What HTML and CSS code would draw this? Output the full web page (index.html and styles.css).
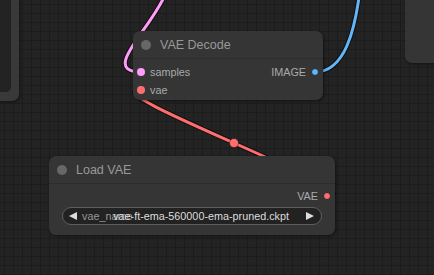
FILE: index.html
```html
<!DOCTYPE html>
<html lang="en">
<head>
    <meta charset="UTF-8">
    <title>VAE Decode</title>
    <link rel="stylesheet" href="styles.css">
</head>
<body>

    <div id="canvas">
        <svg class="links" width="434" height="275" viewBox="0 0 434 275">
            <path class="edge" d="M165,-5 C150,30 100,72 141,72"/>
            <path class="wire latent" d="M165,-5 C150,30 100,72 141,72"/>
            <path class="edge" d="M315,72 C345,72 355,30 360,-10"/>
            <path class="wire image" d="M315,72 C345,72 355,30 360,-10"/>
            <path class="edge" d="M327,196 C380,196 88,90 141,90"/>
            <path class="wire vae" d="M327,196 C380,196 88,90 141,90"/>
            <circle class="marker" cx="234" cy="143" r="4.5"/>
        </svg>

        <div class="node node-left">
            <div class="textarea"></div>
        </div>

        <div class="node node-right"></div>

        <div class="node vae-decode">
            <div class="title"><span class="dot"></span>VAE Decode</div>
            <div class="body">
                <div class="row">
                    <span class="slot"><i class="pin latent"></i>samples</span>
                    <span class="slot out">IMAGE<i class="pin image"></i></span>
                </div>
                <div class="row">
                    <span class="slot"><i class="pin vae"></i>vae</span>
                </div>
            </div>
        </div>

        <div class="node load-vae">
            <div class="title"><span class="dot"></span>Load VAE</div>
            <div class="body">
                <div class="row">
                    <span class="slot out">VAE<i class="pin vae"></i></span>
                </div>
                <div class="combo">
                    <svg class="arrow" width="10" height="10" viewBox="0 0 10 10"><polygon points="1,5 9,1 9,9"/></svg>
                    <div class="combo-text">
                        <span class="label">vae_name</span>
                        <span class="value">vae-ft-ema-560000-ema-pruned.ckpt</span>
                    </div>
                    <svg class="arrow" width="10" height="10" viewBox="0 0 10 10"><polygon points="9,5 1,1 1,9"/></svg>
                </div>
            </div>
        </div>
    </div>

</body>
</html>
```

FILE: styles.css
```css
body {
    margin: 0;
    padding: 0;
    background-color: #222;
    font-family: "Liberation Sans", Arial, sans-serif;
}

#canvas {
    position: relative;
    width: 434px;
    height: 275px;
    overflow: hidden;
    background-color: #232323;
    background-image:
        linear-gradient(to right, #1c1c1c 1px, transparent 1px),
        linear-gradient(to bottom, #1c1c1c 1px, transparent 1px);
    background-size: 9px 9px;
    background-position: 4px 4px;
}

.links {
    position: absolute;
    left: 0;
    top: 0;
}

.links path {
    fill: none;
}

.edge {
    stroke: rgba(0, 0, 0, 0.55);
    stroke-width: 5;
}

.wire {
    stroke-width: 3;
}

.wire.latent { stroke: #ff9cf9; }
.wire.image { stroke: #64b5f6; }
.wire.vae { stroke: #ff6e6e; }

.marker {
    fill: #ff6e6e;
    stroke: rgba(0, 0, 0, 0.4);
    stroke-width: 1;
}

/* nodes */

.node {
    position: absolute;
    background-color: #353535;
    border-radius: 7px;
    box-shadow: 1px 1px 3px rgba(0, 0, 0, 0.45);
    color: #aaa;
}

.node-left {
    left: -200px;
    top: -100px;
    width: 219px;
    height: 201px;
    padding: 0 8px 9px 0;
    box-sizing: border-box;
    background-color: #393939;
}

.textarea {
    height: 100%;
    background-color: #232323;
    border-radius: 0 0 5px 0;
}

.node-right {
    left: 405px;
    top: -100px;
    width: 200px;
    height: 163px;
}

.vae-decode {
    left: 133px;
    top: 31px;
    width: 190px;
}

.load-vae {
    left: 49px;
    top: 156px;
    width: 286px;
}

.title {
    display: flex;
    align-items: center;
    height: 27px;
    padding-left: 8px;
    border-bottom: 1px solid #2d2d2d;
    color: #999;
    font-size: 12.5px;
}

.dot {
    width: 10px;
    height: 10px;
    border-radius: 50%;
    background-color: #676767;
    margin-right: 9px;
}

.body {
    padding: 4px 0 1px;
}

.load-vae .body {
    padding: 3px 0 10px;
}

.row {
    display: flex;
    align-items: center;
    height: 18px;
    font-size: 10.8px;
}

.slot {
    display: flex;
    align-items: center;
}

.slot.out {
    margin-left: auto;
}

.pin {
    width: 8px;
    height: 8px;
    border-radius: 50%;
    margin: 0 5px 0 4px;
    box-sizing: border-box;
}

.slot.out .pin {
    margin: 0 4px 0 5px;
    border: 1px solid #1e2a33;
}

.pin.latent { background-color: #ff9cf9; }
.pin.image { background-color: #64b5f6; }
.pin.vae { background-color: #ff6e6e; }

.combo {
    display: flex;
    align-items: center;
    height: 18px;
    margin: 2px 13px 0;
    padding: 0 6px 0 5px;
    box-sizing: border-box;
    background-color: #222;
    border: 1px solid #5e5e5e;
    border-radius: 9px;
    font-size: 10.8px;
}

.arrow {
    fill: #ddd;
    flex: none;
}

.combo-text {
    flex: 1;
    display: grid;
    margin: 0 16px 0 4px;
}

.combo-text .label,
.combo-text .value {
    grid-area: 1 / 1;
    white-space: nowrap;
}

.label {
    color: #999;
}

.value {
    color: #ddd;
    justify-self: end;
}
```
